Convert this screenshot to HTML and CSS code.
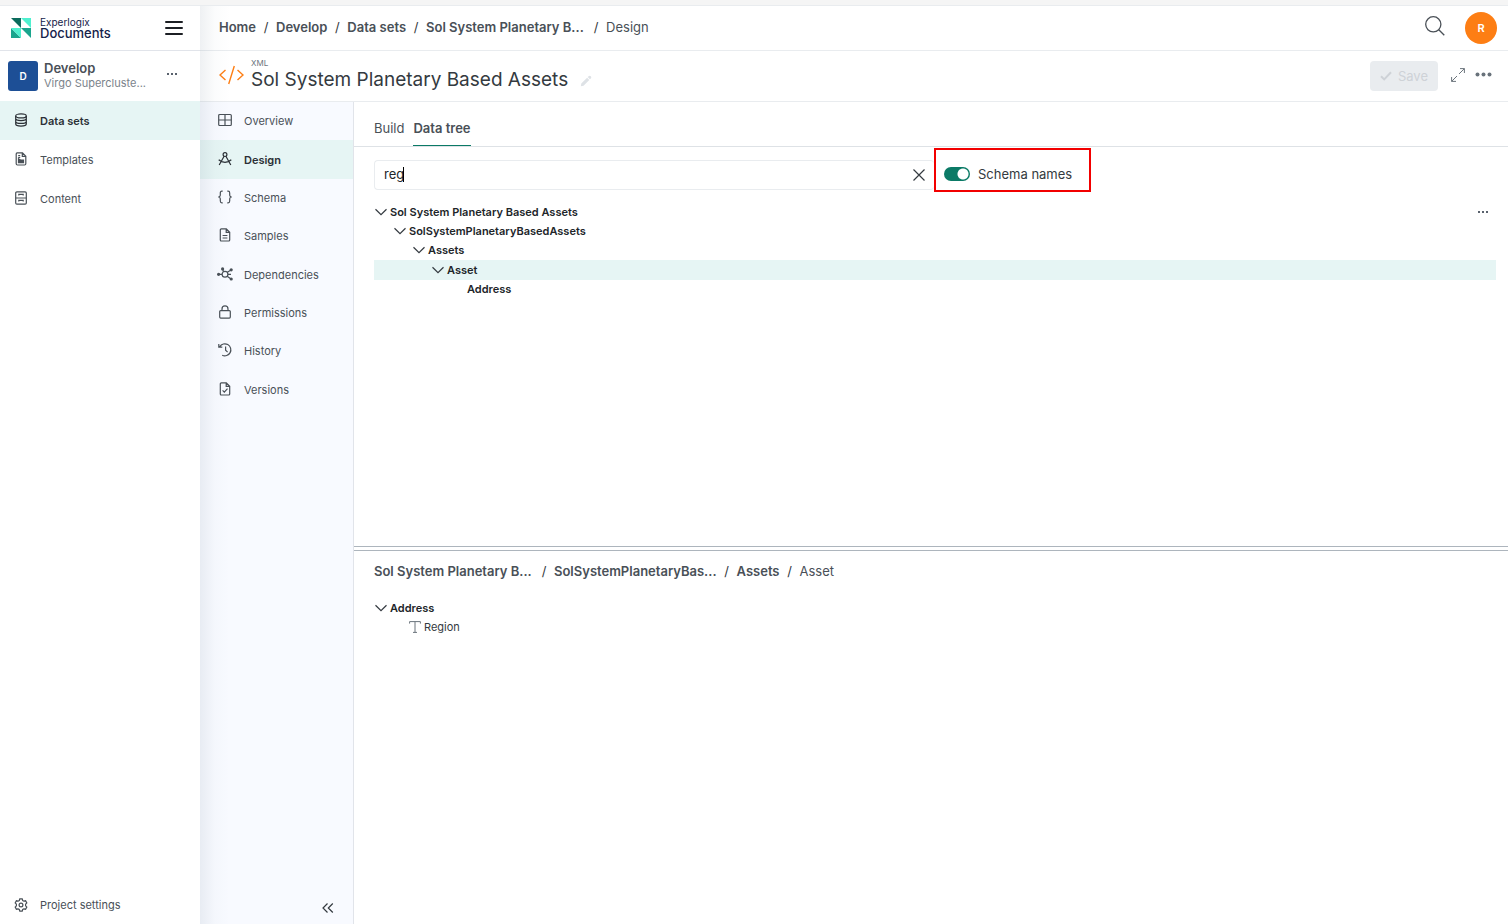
FILE: index.html
```html
<!DOCTYPE html>
<html lang="en">
<head>
<meta charset="utf-8">
<title>Sol System Planetary Based Assets</title>
<link rel="stylesheet" href="styles.css">
</head>
<body>
<div class="strip"></div>
<div class="app">
  <aside class="sidebar">
    <div class="brand">
      <svg class="brand-mark" width="20" height="20" viewBox="0 0 20 20" aria-hidden="true">
        <path d="M0 0H10V10Z" fill="#0b6b5c"/><path d="M10 0H20V10Z" fill="#4ff0cf"/>
        <path d="M0 10V20H10Z" fill="#1aa58d"/><path d="M0 10H10V20Z" fill="#4ff0cf"/><path d="M10 10H20V20Z" fill="#1aa58d"/>
      </svg>
      <div class="brand-name"><span class="brand-top">Experlogix</span><span class="brand-bottom">Documents</span></div>
      <button class="icon-btn burger" aria-label="Menu"><svg width="18" height="16" viewBox="0 0 18 16"><path d="M1 2h16M1 8h16M1 14h16" stroke="#1c1f24" stroke-width="2" fill="none" stroke-linecap="round"/></svg></button>
    </div>
    <div class="project">
      <span class="project-tile">D</span>
      <div class="project-text"><span class="project-name">Develop</span><span class="project-sub">Virgo Supercluste...</span></div>
      <button class="icon-btn project-more" aria-label="Project menu"><svg width="12" height="4" viewBox="0 0 12 4" fill="#59626d"><rect x="1" y="1" width="2" height="2"/><rect x="5" y="1" width="2" height="2"/><rect x="9" y="1" width="2" height="2"/></svg></button>
    </div>
    <nav class="main-nav">
      <a class="nav-link active" href="#"><svg class="icon" viewBox="0 0 14 14"><ellipse cx="7" cy="2.900" rx="5.300" ry="2"/><path d="M1.700 2.900v8.200c0 1.100 2.400 2 5.300 2s5.300-.9 5.300-2V2.900M1.700 5.600c0 1.100 2.400 2 5.300 2s5.300-.9 5.300-2M1.700 8.400c0 1.100 2.400 2 5.300 2s5.300-.9 5.300-2"/></svg>Data sets</a>
      <a class="nav-link" href="#"><svg class="icon" viewBox="0 0 14 14"><path d="M3.200.9h5.300l3.300 3.300v7.600a1.200 1.200 0 0 1-1.200 1.200H3.400a1.200 1.200 0 0 1-1.200-1.200V2A1.100 1.100 0 0 1 3.200.9zM8.300 1v3.400h3.400M4.200 3.700h2M4.200 5.500h2"/><path d="M4.500 6.700l2 1.300h3v2.700h-5z" fill="currentColor"/></svg>Templates</a>
      <a class="nav-link" href="#"><svg class="icon" viewBox="0 0 14 14"><rect x="1.700" y=".9" width="10.600" height="12.200" rx="1.200"/><path d="M1.700 7h10.600M4.800 4.600V3.400h4.400v1.200M4.800 10.600V9.400h4.400v1.200"/></svg>Content</a>
    </nav>
    <a class="nav-link settings" href="#"><svg class="icon gear" viewBox="0 0 14 14"><circle cx="7" cy="7" r="1.900"/><path d="M5.800.8h2.400l.5 1.700 1.200.7 1.700-.4 1.200 2.100L11.600 6.200v1.600l1.200 1.300-1.200 2.100-1.700-.4-1.200.7-.5 1.700H5.800l-.5-1.700-1.200-.7-1.700.4-1.200-2.100L2.400 7.800V6.200L1.200 4.900l1.200-2.100 1.700.4 1.200-.7z"/></svg>Project settings</a>
  </aside>

  <div class="content">
    <header class="topbar">
      <nav class="crumbs" aria-label="Breadcrumb">
        <a href="#">Home</a><span class="sep">/</span><a href="#">Develop</a><span class="sep">/</span><a href="#">Data sets</a><span class="sep">/</span><a class="crumb-long" href="#">Sol System Planetary B...</a><span class="sep">/</span><span class="here">Design</span>
      </nav>
      <button class="icon-btn search-btn" aria-label="Search"><svg width="20" height="20" viewBox="0 0 20 20" fill="none" stroke="#4a5057" stroke-width="1.300"><circle cx="8.300" cy="8.300" r="7.600"/><path d="M13.800 13.800L19.300 19.300"/></svg></button>
      <button class="avatar" aria-label="Account">R</button>
    </header>

    <div class="titlebar">
      <svg class="kind-icon" width="25" height="20" viewBox="0 0 25 20" fill="none" stroke="#fd7e14" stroke-width="1.400" aria-hidden="true"><path d="M6.500 5L1 10l5.500 5M18.500 5L24 10l-5.500 5M15.300 1L9.700 19"/></svg>
      <div class="title-text"><span class="kind">XML</span><h1>Sol System Planetary Based Assets</h1></div>
      <button class="icon-btn edit" aria-label="Rename"><svg width="12" height="12" viewBox="0 0 12 12" fill="#dee2e6"><path d="M8.600 1.200a1.500 1.500 0 0 1 2.200 2.200l-.9.9-2.200-2.200zM7.100 2.700l2.200 2.200-5.800 5.800L.8 11.300l.5-2.800z"/></svg></button>
      <button class="save" disabled><svg width="12" height="10" viewBox="0 0 12 10"><path d="M1 5.200L4.200 8.400L11 1.200" fill="none" stroke="#ced2d7" stroke-width="2"/></svg>Save</button>
      <button class="icon-btn expand" aria-label="Expand"><svg width="14" height="14" viewBox="0 0 14 14" fill="none" stroke="#6c757d"><path d="M9 .6h4.400V5M13.400.6L8 6M5 13.400H.6V9M.6 13.400L6 8"/></svg></button>
      <button class="icon-btn more" aria-label="More"><svg width="17" height="5" viewBox="0 0 17 5" fill="#69727b"><circle cx="2.500" cy="2.500" r="2"/><circle cx="8.500" cy="2.500" r="2"/><circle cx="14.500" cy="2.500" r="2"/></svg></button>
    </div>

    <div class="workspace">
      <aside class="submenu">
        <nav class="sub-nav">
          <a class="sub-link" href="#"><svg class="icon" viewBox="0 0 14 14"><rect x=".7" y="1.500" width="12.600" height="11" rx="1"/><path d="M7 1.500v11M.7 7h12.600"/></svg>Overview</a>
          <a class="sub-link active" href="#"><svg class="icon" viewBox="0 0 14 14"><circle cx="7" cy="2.600" r="1.900"/><path d="M6.100 4.300L1.200 13M7.900 4.300L12.800 13M.7 7.800c3.600 3.300 9 3.300 12.600 0"/></svg>Design</a>
          <a class="sub-link" href="#"><svg class="icon" viewBox="0 0 14 14"><path d="M4.700 1.200H3.900Q2.300 1.200 2.300 3v2.200Q2.300 6.700.4 7q1.900.3 1.900 1.800V11q0 1.800 1.600 1.800h.8M9.300 1.200h.8q1.600 0 1.600 1.800v2.200q0 1.500 1.900 1.800-1.900.3-1.900 1.800V11q0 1.800-1.600 1.800h-.8"/></svg>Schema</a>
          <a class="sub-link" href="#"><svg class="icon" viewBox="0 0 14 14"><path d="M3.300.9h5l3.400 3.400v7.700a1 1 0 0 1-1 1H3.300a1 1 0 0 1-1-1V1.900a1 1 0 0 1 1-1zM8.200 1v3.400h3.400M4.600 7.500h4.800M4.600 10h4.800"/></svg>Samples</a>
          <a class="sub-link" href="#"><svg class="icon wide" viewBox="-1 0 16 14"><circle cx="7" cy="7.300" r="2.900"/><path d="M4 7.300H.5M5.500 4.700L4.600 2M9.300 5.300L13 3M9.200 9.300L13 12M9.900 7.300H13"/><g fill="currentColor" stroke="none"><circle cx=".6" cy="7.300" r="1.600"/><circle cx="4.600" cy="1.900" r="1.600"/><circle cx="13.200" cy="2.800" r="1.600"/><circle cx="13.200" cy="12" r="1.600"/></g></svg>Dependencies</a>
          <a class="sub-link" href="#"><svg class="icon" viewBox="0 0 14 14"><rect x="1.700" y="5.600" width="10.600" height="7.500" rx="1"/><path d="M4 5.500V3.900a3 3 0 0 1 6 0v1.600"/></svg>Permissions</a>
          <a class="sub-link" href="#"><svg class="icon" viewBox="0 0 14 14"><path d="M1.700 3.700a6 6 0 1 1 2.500 8.500M.8.900v3.300h3.500M7.600 3.500V7.300l2 1.800"/></svg>History</a>
          <a class="sub-link" href="#"><svg class="icon" viewBox="0 0 14 14"><path d="M3.300.9h5l3.400 3.400v7.700a1 1 0 0 1-1 1H3.300a1 1 0 0 1-1-1V1.900a1 1 0 0 1 1-1zM8.200 1v3.400h3.400M4.600 8.400l1.700 1.700 3.200-3.500"/></svg>Versions</a>
        </nav>
        <button class="icon-btn collapse" aria-label="Collapse"><svg width="12" height="10" viewBox="0 0 12 10" fill="none" stroke="#343a40" stroke-width="1.200"><path d="M5.500.5L1 5l4.500 4.500M10.800.5L6.300 5l4.500 4.500"/></svg></button>
      </aside>

      <main class="panel">
        <div class="tabs" role="tablist">
          <button class="tab" role="tab" aria-selected="false">Build</button>
          <button class="tab selected" role="tab" aria-selected="true">Data tree</button>
        </div>
        <section class="tree-pane">
          <div class="filter">
            <div class="search-box">
              <input class="search-input" type="text" value="reg" aria-label="Filter data tree">
              <span class="caret"></span>
              <button class="icon-btn clear" aria-label="Clear"><svg width="12" height="12" viewBox="0 0 12 12" stroke="#343a40" stroke-width="1.200"><path d="M.5.5l11 11M11.500.5l-11 11"/></svg></button>
            </div>
            <label class="switch-box"><input class="switch" type="checkbox" role="switch" checked><span>Schema names</span></label>
          </div>
          <div class="tree main-tree" role="tree">
            <div class="node" role="treeitem"><svg class="chev" viewBox="0 0 12 12"><path d="M.5 3.200L6 8.600l5.500-5.400"/></svg>Sol System Planetary Based Assets<button class="icon-btn node-more" aria-label="Node menu"><svg width="12" height="4" viewBox="0 0 12 4" fill="#59626d"><rect x="1" y="1" width="2" height="2"/><rect x="5" y="1" width="2" height="2"/><rect x="9" y="1" width="2" height="2"/></svg></button></div>
            <div class="node level-1" role="treeitem"><svg class="chev" viewBox="0 0 12 12"><path d="M.5 3.200L6 8.600l5.500-5.400"/></svg>SolSystemPlanetaryBasedAssets</div>
            <div class="node level-2" role="treeitem"><svg class="chev" viewBox="0 0 12 12"><path d="M.5 3.200L6 8.600l5.500-5.400"/></svg>Assets</div>
            <div class="node level-3 current" role="treeitem"><svg class="chev" viewBox="0 0 12 12"><path d="M.5 3.200L6 8.600l5.500-5.400"/></svg>Asset</div>
            <div class="node level-4" role="treeitem"><span class="chev"></span>Address</div>
          </div>
        </section>
        <div class="splitter"></div>
        <section class="detail-pane">
          <nav class="crumbs" aria-label="Node path">
            <a class="crumb-long" href="#">Sol System Planetary B...</a><span class="sep">/</span><a class="crumb-long" href="#">SolSystemPlanetaryBas...</a><span class="sep">/</span><a href="#">Assets</a><span class="sep">/</span><span class="here">Asset</span>
          </nav>
          <div class="tree detail-tree" role="tree">
            <div class="node" role="treeitem"><svg class="chev" viewBox="0 0 12 12"><path d="M.5 3.200L6 8.600l5.500-5.400"/></svg>Address</div>
            <div class="node leaf" role="treeitem"><svg class="type" viewBox="0 0 12 12"><path d="M.6 2.600V.6h10.800v2M6 .6v10.800M4 11.400h4"/></svg>Region</div>
          </div>
        </section>
      </main>
    </div>
  </div>
</div>
</body>
</html>
```
FILE: styles.css
```css
* { box-sizing: border-box; }
body {
  margin: 0;
  height: 100vh;
  display: flex;
  flex-direction: column;
  background: #fff;
  color: #495057;
  font-family: Inter, "Liberation Sans", sans-serif;
  font-size: 13px;
}
a { color: inherit; text-decoration: none; }
button, input { font: inherit; color: inherit; }
.icon-btn { display: flex; padding: 0; border: 0; background: none; }

.strip { height: 6px; background: #f5f5f5; border-bottom: 1px solid #e9ecef; }
.app { flex: 1; display: flex; min-height: 0; }

.sidebar { width: 200px; display: flex; flex-direction: column; background: #fff; }
.brand {
  height: 45px;
  display: flex;
  align-items: center;
  padding: 0 17px 0 11px;
  gap: 9px;
  border-bottom: 1px solid #e1e4ea;
}
.brand-name { display: flex; flex-direction: column; flex: 1; color: #15224a; }
.brand-top { font-size: 10px; line-height: 10px; }
.brand-bottom { font-size: 13px; line-height: 13px; font-weight: 500; }
.project { height: 50px; display: flex; align-items: center; gap: 6px; padding: 0 22px 0 8px; }
.project-tile {
  width: 30px;
  height: 30px;
  display: grid;
  place-items: center;
  border-radius: 3px;
  background: #1d4f96;
  color: #fff;
  font-size: 10px;
  font-weight: 600;
}
.project-text { flex: 1; display: flex; flex-direction: column; padding-bottom: 2px; }
.project-name { font-size: 13px; line-height: 15px; font-weight: 600; }
.project-sub { font-size: 11px; line-height: 14px; color: #7b838b; white-space: nowrap; }
.project-more { padding-bottom: 4px; }
.main-nav { flex: 1; }
.nav-link {
  height: 39px;
  display: flex;
  align-items: center;
  gap: 12px;
  padding: 0 14px;
  font-size: 11px;
}
.active { background: #e6f5f4; color: #2b3036; font-weight: 600; }
.icon { width: 14px; height: 14px; margin-bottom: 2px; fill: none; stroke: currentColor; stroke-width: 1.2; overflow: visible; }
.gear { margin-bottom: 0; }

.content {
  flex: 1;
  min-width: 0;
  display: flex;
  flex-direction: column;
  position: relative;
}
.content::before {
  content: "";
  position: absolute;
  inset: 0 auto 0 0;
  width: 30px;
  background: linear-gradient(to right, rgba(70, 95, 120, .09), rgba(70, 95, 120, .02) 50%, transparent);
  pointer-events: none;
}
.topbar {
  height: 45px;
  display: flex;
  align-items: center;
  padding: 0 11px 0 19px;
  border-bottom: 1px solid #e9ecef;
}
.crumbs { flex: 1; display: flex; align-items: center; padding-bottom: 2px; font-weight: 600; font-size: 13px; line-height: 18px; white-space: nowrap; }
.sep { width: 20px; text-align: center; font-weight: 400; color: #343a40; }
.crumb-long { min-width: 160px; }
.here { font-weight: 400; }
.search-btn { margin-right: 20px; padding-bottom: 4px; }
.avatar {
  width: 32px;
  height: 32px;
  padding: 0;
  border: 0;
  border-radius: 50%;
  background: #fd7e14;
  color: #fff;
  font-size: 11px;
  font-weight: 600;
}
.titlebar {
  height: 51px;
  display: flex;
  align-items: center;
  padding: 0 16px 0 19px;
  border-bottom: 1px solid #e9ecef;
}
.kind-icon { margin-bottom: 2px; }
.title-text { margin: 0 12px 0 7px; display: flex; flex-direction: column; }
.kind { font-size: 8px; line-height: 8px; color: #6c757d; }
h1 { margin: 0; font-size: 19px; line-height: 26px; font-weight: 400; color: #343a40; }
.edit { margin-top: 9px; }
.save {
  height: 30px;
  margin-left: auto;
  padding: 0 10px;
  display: flex;
  align-items: center;
  gap: 6px;
  border: 0;
  border-radius: 4px;
  background: #e9ecef;
  color: #ced2d7;
}
.expand { margin: 0 10px 0 13px; padding-bottom: 2px; }
.more { padding-bottom: 4px; }

.workspace { flex: 1; display: flex; min-height: 0; }
.submenu {
  width: 154px;
  display: flex;
  flex-direction: column;
  justify-content: space-between;
  background: #f8faff;
  border-right: 1px solid #e1e4ea;
}
.sub-nav { height: 307px; display: grid; grid-auto-rows: 1fr; }
.sub-link { display: flex; align-items: center; gap: 12px; padding: 0 18px; font-size: 11px; }
.wide { width: 16px; margin-left: -1px; margin-right: -1px; }
.collapse { align-self: flex-end; margin: 0 19px 11px 0; }

.panel { flex: 1; min-width: 0; display: flex; flex-direction: column; }
.tabs { height: 45px; display: flex; align-items: flex-end; gap: 9px; padding: 0 20px; border-bottom: 1px solid #dee2e6; }
.tab { height: 35px; padding: 0; border: 0; border-bottom: 1px solid transparent; background: none; }
.selected { border-color: #0b7a66; font-weight: 600; }
.tree-pane { flex: 0 0 399px; padding: 1px 12px 0 20px; }
.filter { display: flex; align-items: flex-end; }
.search-box {
  flex: 0 1 560px;
  height: 30px;
  display: flex;
  align-items: center;
  position: relative;
  margin-bottom: 2px;
  padding-right: 9px;
  border: 1px solid #e9ecef;
  border-right: 0;
  border-radius: 4px;
}
.search-input { flex: 1; min-width: 0; height: 28px; padding: 0 9px 2px; border: 0; outline: 0; background: none; color: #212529; }
.caret { position: absolute; left: 28px; top: 6px; width: 1px; height: 15px; background: #000; }
.switch-box {
  width: 157px;
  height: 44px;
  display: flex;
  align-items: center;
  gap: 8px;
  padding: 8px 8px 0;
  border: 2px solid #f20000;
  color: #343a40;
}
.switch {
  appearance: none;
  width: 26px;
  height: 14px;
  margin: 0;
  border-radius: 7px;
  background: radial-gradient(circle at 19px 7px, #fff 5px, transparent 6px) #0b7a66;
}
.tree { margin-top: 10px; color: #212529; font-size: 11px; font-weight: 600; }
.main-tree { height: 97px; display: grid; grid-auto-rows: 1fr; }
.node { min-height: 19px; display: flex; align-items: center; gap: 3px; padding: 0 7px 0 1px; }
.level-1 { padding-left: 20px; }
.level-2 { padding-left: 39px; }
.level-3 { padding-left: 58px; }
.level-4 { padding-left: 78px; }
.current { background: #e6f5f4; }
.node-more { margin-left: auto; }
.chev, .type { width: 12px; height: 12px; fill: none; stroke: #343a40; stroke-width: 1.2; }
.splitter { height: 5px; border: solid #adb5bd; border-width: 1px 0; }
.detail-pane { flex: 1; padding: 11px 20px; }
.detail-tree { margin-top: 16px; }
.leaf { padding-left: 35px; font-weight: 400; color: #343a40; }
.type { stroke: #6c757d; stroke-width: 1; }
```
